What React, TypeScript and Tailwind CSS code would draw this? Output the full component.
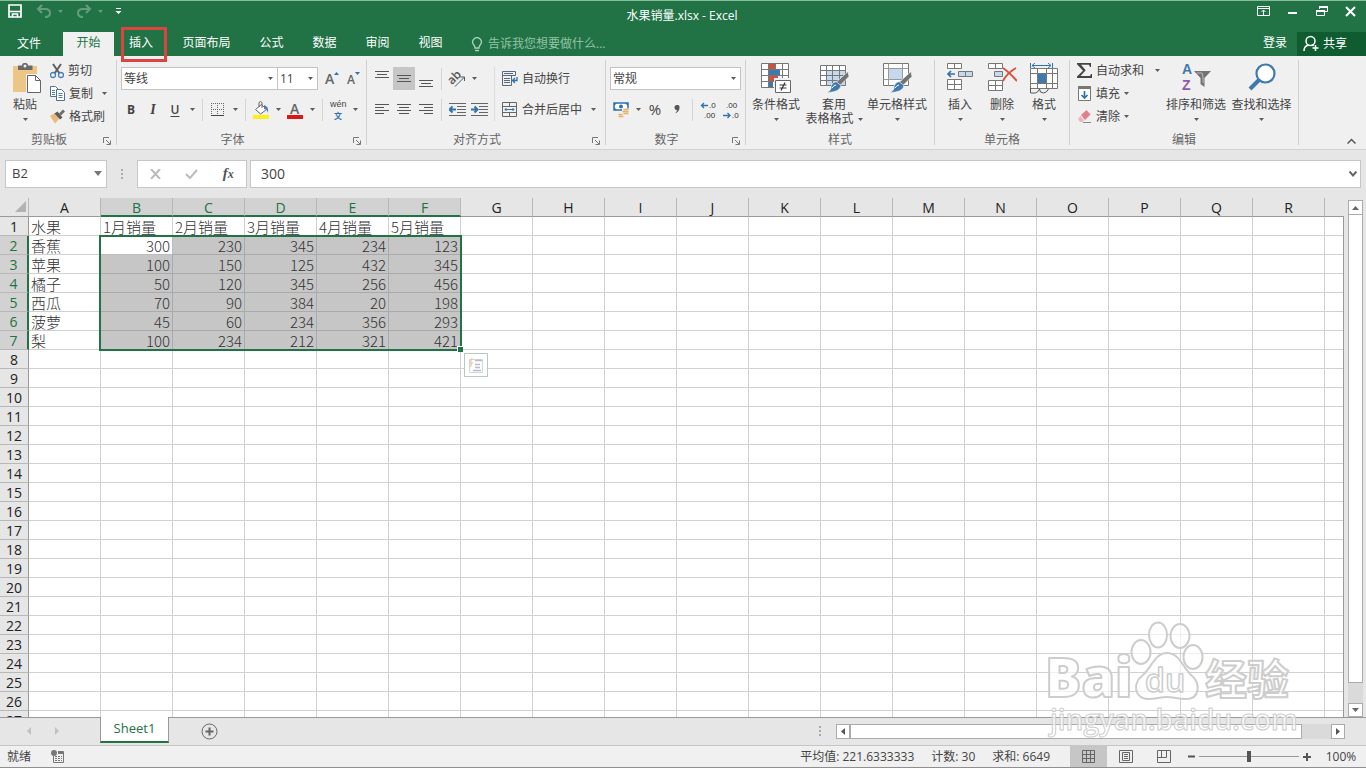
import type { ReactNode } from 'react';

const COLUMNS = 'ABCDEFGHIJKLMNOPQRS'.split('');
const ROW_COUNT = 27;

const SHEET: (string | number)[][] = [
  ['水果', '1月销量', '2月销量', '3月销量', '4月销量', '5月销量'],
  ['香蕉', 300, 230, 345, 234, 123],
  ['苹果', 100, 150, 125, 432, 345],
  ['橘子', 50, 120, 345, 256, 456],
  ['西瓜', 70, 90, 384, 20, 198],
  ['菠萝', 45, 60, 234, 356, 293],
  ['梨', 100, 234, 212, 321, 421],
];

const inSelectedRows = (row: number) => row >= 1 && row <= 6;
const inSelectedCols = (col: number) => col >= 1 && col <= 5;

/* ---------- small shared pieces ---------- */

function Caret({ className = '' }: { className?: string }) {
  return (
    <svg className={className} width="5" height="3" viewBox="0 0 5 3" aria-hidden="true">
      <path d="M0 0h5L2.500 3z" fill="#5c5c5c" />
    </svg>
  );
}

function CaretButton({ label }: { label: string }) {
  return (
    <button aria-label={label} className="flex h-[22px] w-3 items-center justify-center">
      <Caret />
    </button>
  );
}

function IconButton({ label, active = false, children }: { label: string; active?: boolean; children: ReactNode }) {
  return (
    <button
      aria-label={label}
      className={`flex h-[23px] w-[22px] shrink-0 items-center justify-center ${active ? 'bg-[#c6c6c6]' : ''}`}
    >
      {children}
    </button>
  );
}

function Rule() {
  return <span className="mx-1 h-[22px] w-px shrink-0 bg-[#d4d4d4]" />;
}

function RibbonGroup({
  title,
  launcher = false,
  className,
  children,
}: {
  title: string;
  launcher?: boolean;
  className: string;
  children: ReactNode;
}) {
  return (
    <section aria-label={title} className={`flex shrink-0 ${className}`}>
      <div className="flex min-w-0 flex-1 flex-col pt-[3px]">
        <div className="flex h-[70px]">{children}</div>
        <div className="flex h-5 items-center pt-[2px]">
          <span className="flex-1 text-center text-[#666]">{title}</span>
          {launcher && (
            <button aria-label={`${title}设置`} className="flex w-[18px] items-center justify-center pt-[2px]">
              <svg width="8" height="8" viewBox="0 0 8 8" fill="none" stroke="#777">
                <path d="M.5 6V.5H6M3 3l4 4M7.500 3.500v4h-4" />
              </svg>
            </button>
          )}
        </div>
      </div>
      <span className="my-1 w-px bg-[#d0d0d0]" />
    </section>
  );
}

function BigButton({
  label,
  secondLine,
  className,
  children,
}: {
  label: string;
  secondLine?: string;
  className: string;
  children: ReactNode;
}) {
  return (
    <button className={`flex shrink-0 flex-col items-center pt-1 leading-[14px] whitespace-nowrap ${className}`}>
      {children}
      <span className="mt-1">{label}</span>
      <span className="flex h-[14px] items-center gap-1">
        {secondLine}
        <Caret />
      </span>
    </button>
  );
}

function SmallButton({ label, children }: { label: string; children: ReactNode }) {
  return (
    <button className="flex h-[23px] items-center gap-1 whitespace-nowrap">
      {children}
      {label}
    </button>
  );
}

function Combo({ label, value, className }: { label: string; value: string; className: string }) {
  return (
    <div className={`relative h-[23px] ${className}`}>
      <select
        aria-label={label}
        className="h-full w-full appearance-none border border-[#c4c4c4] bg-white pl-[2px] text-[12px] text-[#444] outline-none"
      >
        <option>{value}</option>
      </select>
      <Caret className="pointer-events-none absolute top-[10px] right-[5px]" />
    </div>
  );
}

/* ---------- icons ---------- */

function Lines({ rows }: { rows: [number, number, number][] }) {
  return (
    <svg width="16" height="22" viewBox="0 0 16 22" stroke="#555" aria-hidden="true">
      {rows.map(([x1, x2, y]) => (
        <path key={y} d={`M${x1} ${y + 0.5}H${x2}`} />
      ))}
    </svg>
  );
}

function PasteIcon() {
  return (
    <svg className="ml-1" width="30" height="31" viewBox="0 0 30 31" aria-hidden="true">
      <path d="M1 3h24v26H1z" fill="#ecc684" />
      <path d="M6 7V2.500h4c0-3.500 6-3.500 6 0h4.500V7z" fill="#6a6a6a" />
      <circle cx="13" cy="3" r="1.500" fill="#f0f0f0" />
      <path d="M14 11h11v19H14z" fill="#f0f0f0" />
      <path d="M15.500 12.500h8l5 5v12h-13z" fill="#fff" stroke="#666" />
      <path d="M23.500 12.500v5h5" fill="none" stroke="#666" />
    </svg>
  );
}

function CutIcon() {
  return (
    <svg width="14" height="16" viewBox="0 0 14 16" fill="none" aria-hidden="true">
      <path d="M3 1l6.500 9.500M11 1L4.500 10.500" stroke="#5f5f5f" strokeWidth="2" />
      <circle cx="3" cy="12" r="2.500" stroke="#4a7fb5" strokeWidth="1.300" />
      <circle cx="11" cy="12" r="2.500" stroke="#4a7fb5" strokeWidth="1.300" />
    </svg>
  );
}

function CopyIcon() {
  return (
    <svg width="15" height="15" viewBox="0 0 15 15" fill="#fff" stroke="#56708c" aria-hidden="true">
      <path d="M.5.5h5l3 3v7h-8z" />
      <path d="M6.500 3.500h5l3 3v8h-8z" />
      <path d="M2 4.500h3M2 6.500h3M2 8.500h3M8.500 7.500h4M8.500 9.500h4M8.500 11.500h4" stroke="#4a7fb5" />
    </svg>
  );
}

function BrushIcon() {
  return (
    <svg width="15" height="15" viewBox="0 0 15 15" aria-hidden="true">
      <path d="M0 7l5-3 4 6-4 4.500z" fill="#ecb978" />
      <path d="M4.500 4.500l3-2 5 6-2.500 2z" fill="#5b5b5b" />
      <path d="M9 4.500l4-4 2 2-4 4z" fill="#6d6d6d" />
    </svg>
  );
}

function BorderIcon() {
  return (
    <svg width="14" height="14" viewBox="0 0 14 14" fill="none" stroke="#666" strokeDasharray="1 1" aria-hidden="true">
      <path d="M0 .5h13M0 6.500h13M.5 0v12M6.500 0v12M12.500 0v12" />
      <path d="M0 12.500h13" stroke="#444" strokeDasharray="none" />
    </svg>
  );
}

function FillIcon() {
  return (
    <svg width="18" height="18" viewBox="0 0 18 18" fill="none" aria-hidden="true">
      <path d="M3.500 8.500l6-5 5 5-6 4.500z" fill="#fff" stroke="#666" />
      <path d="M7 6V1.500q1.500-2 3 0V7" stroke="#666" />
      <path d="M12 4q5 1 4 8-1-4-4-4z" fill="#4a7fb5" />
      <path d="M1 14h16v4H1z" fill="#ffef14" />
    </svg>
  );
}

function OrientationIcon() {
  return (
    <svg className="overflow-visible" width="18" height="18" viewBox="0 0 18 18" fill="none" stroke="#555" aria-hidden="true">
      <text x="0" y="12" transform="rotate(-45 6 9)" fontSize="12" fontWeight="600" fill="#555" stroke="none">
        ab
      </text>
      <path d="M7 16.500l9-9M16.500 11V7h-4" />
    </svg>
  );
}

function IndentIcon({ increase = false }: { increase?: boolean }) {
  return (
    <svg width="17" height="14" viewBox="0 0 17 14" fill="none" aria-hidden="true">
      <path d="M0 .5h17M8 3.500h9M8 6.500h9M8 9.500h9M0 12.500h17" stroke="#666" />
      {increase ? (
        <path d="M0 6.500h6M3.500 3.500l3 3-3 3" stroke="#2f72b0" strokeWidth="2" />
      ) : (
        <path d="M1 6.500h6M3.500 3.500l-3 3 3 3" stroke="#2f72b0" strokeWidth="2" />
      )}
    </svg>
  );
}

function WrapIcon() {
  return (
    <svg width="16" height="16" viewBox="0 0 16 16" fill="none" stroke="#5a6a7a" aria-hidden="true">
      <path d="M.5 4.500h9v10h-9zM.5.500h13v4H.5z" />
      <path d="M2 2.500h9M2 7.500h6M2 9.500h6M2 11.500h6" />
      <path d="M15 6v3.500h-4M13 7l-2.500 2.500L13 12" stroke="#2f72b0" strokeWidth="1.300" />
    </svg>
  );
}

function MergeIcon() {
  return (
    <svg width="16" height="16" viewBox="0 0 16 16" fill="none" stroke="#666" aria-hidden="true">
      <path d="M.5.500h14v14H.5zM.5 4.500h14M.5 10.500h14M7.500.500v4M7.500 10.500v4" />
      <path d="M3 7.500h9M4.500 6L3 7.500 4.500 9M10.500 6L12 7.500 10.500 9" stroke="#2f72b0" />
    </svg>
  );
}

function CurrencyIcon() {
  return (
    <svg width="17" height="17" viewBox="0 0 17 17" fill="none" aria-hidden="true">
      <path d="M1 2h14v7H1z" fill="#fff" stroke="#2f72b0" strokeWidth="1.500" />
      <path d="M1 2h3L1 5zM15 2h-3l3 3zM1 9V6l3 3z" fill="#2f72b0" />
      <circle cx="8" cy="5.500" r="2" fill="#2f72b0" />
      <path d="M9 7.500h8v7h-4v2.500H5v-5h4z" fill="#f0f0f0" />
      <path d="M10.500 8.500h5M9.500 10.500h6M10.500 12.500h5M5.500 13.500h4M5.500 15.500h5" stroke="#e8b063" strokeWidth="1.500" />
    </svg>
  );
}

function DecimalIcon({ increase = false }: { increase?: boolean }) {
  return (
    <svg
      className="overflow-visible"
      width="17"
      height="16"
      viewBox="0 0 17 16"
      fontSize="8"
      fontFamily="Liberation Sans"
      fill="#333"
      aria-hidden="true"
    >
      <text x={increase ? 9 : 4} y="6">
        {increase ? '.0' : '.00'}
      </text>
      <text x={increase ? 4 : 10} y="16">
        {increase ? '.00' : '.0'}
      </text>
      {increase ? (
        <path d="M1.500 3.500H8M4 1L1.500 3.500 4 6" fill="none" stroke="#2f72b0" strokeWidth="1.300" />
      ) : (
        <path d="M1 13.500h7M5.500 11L8 13.500 5.500 16" fill="none" stroke="#2f72b0" strokeWidth="1.300" />
      )}
    </svg>
  );
}

function ConditionalIcon() {
  return (
    <svg width="30" height="31" viewBox="0 0 30 31" fill="none" aria-hidden="true">
      <path d="M.5.500h27v24H.5z" fill="#fff" />
      <path d="M8 1h6v6H8zM8 13h9v6H8z" fill="#c9553f" />
      <path d="M8 7h11v6H8zM8 19h4v6H8z" fill="#3f79ae" />
      <path d="M.5.500h27v24H.5zM.5 6.500h27M.5 12.500h27M.5 18.500h27M7.500.500v24M14.500.500v6M21.500.500v24" stroke="#777" />
      <path d="M13 15h17v16H13z" fill="#f0f0f0" />
      <path d="M14.500 17.500h15v12h-15z" fill="#fff" stroke="#666" />
      <path d="M18.500 22h7M18.500 25h7M24 19.500l-4 8" stroke="#333" strokeWidth="1.200" />
    </svg>
  );
}

function PaintBrush() {
  return (
    <>
      <path d="M29 8.500l1 5-9 9-4-3z" fill="#737373" stroke="#fff" strokeWidth=".6" />
      <path d="M17 18.500l5 4q-1 7-15 7 6-2 5-6 1-4 5-5z" fill="#3f79ae" stroke="#fff" strokeWidth=".6" />
      <path d="M13 25q2-3 4-3" stroke="#fff" />
    </>
  );
}

function TableStyleIcon() {
  return (
    <svg width="31" height="31" viewBox="0 0 31 31" fill="none" aria-hidden="true">
      <path d="M1.500 2.500h25v20h-25z" fill="#fff" />
      <path d="M8 7h18v15H8z" fill="#c4d8ee" />
      <path d="M1.500 2.500h25v20h-25zM1.500 7.500h25M1.500 12.500h25M1.500 17.500h25M7.500 2.500v20M13.500 2.500v20M20.500 2.500v20" stroke="#777" />
      <PaintBrush />
    </svg>
  );
}

function CellStyleIcon() {
  return (
    <svg width="31" height="31" viewBox="0 0 31 31" fill="none" aria-hidden="true">
      <path d="M1.500.500h25v22h-25z" fill="#fff" stroke="#777" />
      <path d="M1.500 5.500h25M1.500 16.500h25M6.500.500v22M20.500.500v22" stroke="#999" />
      <path d="M7 6h13v10H7z" fill="#c4d8ee" />
      <PaintBrush />
    </svg>
  );
}

function InsertCellsIcon() {
  return (
    <svg width="28" height="31" viewBox="0 0 28 31" fill="none" stroke="#777" aria-hidden="true">
      <path d="M1.500.500h14v5h-14zM8.500.500v5M1.500 16.500h14v10h-14zM1.500 21.500h14M8.500 16.500v10" fill="#fff" />
      <path d="M12.500 8.500h14v5h-14zM19.500 8.500v5" fill="#c4d8ee" />
      <path d="M2 11h7M5 8l-3 3 3 3" stroke="#2f72b0" strokeWidth="1.700" />
    </svg>
  );
}

function DeleteCellsIcon() {
  return (
    <svg width="30" height="31" viewBox="0 0 30 31" fill="none" stroke="#777" aria-hidden="true">
      <path d="M1.500.500h14v5h-14zM8.500.500v5M1.500 17.500h14v10h-14zM1.500 22.500h14M8.500 17.500v10" fill="#fff" />
      <path d="M7.500 8.500h8v5h-8z" fill="#c4d8ee" />
      <path d="M16 5q6 4 14 13M29 5q-9 5-13 13" stroke="#d6533c" strokeWidth="2" />
    </svg>
  );
}

function FormatCellsIcon() {
  return (
    <svg width="28" height="31" viewBox="0 0 28 31" fill="none" stroke="#777" aria-hidden="true">
      <path d="M.5 5.500h27v20H.5z" fill="#fff" />
      <path d="M.5 10.500h27M.5 20.500h27M7.500 5.500v20M16.500 5.500v20M22.500 5.500v20" />
      <path d="M8 11h8v9H8z" fill="#3f79ae" stroke="none" />
      <path d="M.5 25v5h5q3-1 4-4 0 4 4 4 3 0 5-4" stroke="#555" />
      <path d="M.5 0v5M22.500 0v5M2 2.500h19M5 0L2 2.500 5 5M18 0l3 2.500L18 5" stroke="#2f72b0" />
    </svg>
  );
}

function SigmaIcon() {
  return (
    <svg width="15" height="15" viewBox="0 0 15 15" aria-hidden="true">
      <path d="M0 0h14v4h-1l-1-2.300H4l4.700 5.600L3.500 13H13l1-2h1v4H0v-1.500L6 7.700 0 1.300z" fill="#444" />
    </svg>
  );
}

function FillDownIcon() {
  return (
    <svg width="15" height="15" viewBox="0 0 15 15" fill="none" aria-hidden="true">
      <path d="M1.500.5h12v14h-12z" fill="#fff" stroke="#777" />
      <path d="M1 0h13v3H1z" fill="#777" />
      <path d="M7.500 5v7M4.500 9l3 3 3-3" stroke="#2f72b0" strokeWidth="1.700" />
    </svg>
  );
}

function EraserIcon() {
  return (
    <svg width="15" height="15" viewBox="0 0 15 15" aria-hidden="true">
      <path d="M4 6l5.500-5 4 4.500L8 11z" fill="#e0808c" />
      <path d="M3.300 6.700L7 11.500l-1.500 1.500H3L1 10z" fill="#f0b6bd" />
      <path d="M6 13.500h8" stroke="#888" />
    </svg>
  );
}

function SortFilterIcon() {
  return (
    <svg
      className="overflow-visible"
      width="30"
      height="31"
      viewBox="0 0 30 31"
      fontSize="14"
      fontWeight="700"
      fontFamily="Liberation Sans"
      aria-hidden="true"
    >
      <text x="1" y="11" fill="#3f79ae">
        A
      </text>
      <text x="1" y="27" fill="#8c5aa8">
        Z
      </text>
      <path d="M13 8h17l-6.500 7v9l-4-3v-6z" fill="#737373" />
      <path d="M16 10h5l1 4v6" fill="none" stroke="#bbb" />
    </svg>
  );
}

function FindIcon() {
  return (
    <svg width="30" height="31" viewBox="0 0 30 31" fill="none" aria-hidden="true">
      <path d="M12 17L3 26" stroke="#3f79ae" strokeWidth="4" />
      <circle cx="18.500" cy="10.500" r="9" fill="#fff" stroke="#3f79ae" strokeWidth="2.200" />
    </svg>
  );
}

/* ---------- window header ---------- */

function TitleBar() {
  return (
    <header className="relative flex h-[31px] shrink-0 items-start border-t border-[#86bd9c] bg-[#217346] text-white">
      <div className="flex items-center pt-[3px]">
        <button aria-label="保存" className="ml-2">
          <svg width="14" height="14" viewBox="0 0 14 14" fill="none" stroke="#fff" strokeWidth="1.700">
            <path d="M1 1h12v12H1zM1.500 7.500h11M4.500 13v-3h5v3" />
          </svg>
        </button>
        <button aria-label="撤消" className="ml-[14px] flex items-center gap-[6px] opacity-30">
          <svg width="16" height="14" viewBox="0 0 16 14" fill="none" stroke="#fff" strokeWidth="2">
            <path d="M6 1L2 5l4 4M2 5h7q5 0 5 4t-5 4" />
          </svg>
          <svg width="5" height="3"><path d="M0 0h5L2.500 3z" fill="#fff" /></svg>
        </button>
        <button aria-label="恢复" className="ml-[13px] flex items-center gap-[6px] opacity-30">
          <svg width="16" height="14" viewBox="0 0 16 14" fill="none" stroke="#fff" strokeWidth="2">
            <path d="M10 1l4 4-4 4M14 5H7q-5 0-5 4t5 4" />
          </svg>
          <svg width="5" height="3"><path d="M0 0h5L2.500 3z" fill="#fff" /></svg>
        </button>
        <button aria-label="自定义快速访问工具栏" className="ml-3">
          <svg width="7" height="7" viewBox="0 0 7 7" fill="#fff">
            <path d="M1 0h5v1H1zM.5 3h6l-3 3z" />
          </svg>
        </button>
      </div>
      <h1 className="absolute inset-x-0 top-[6px] pr-[2px] text-center text-[12px] leading-[18px]">水果销量.xlsx - Excel</h1>
      <div className="relative ml-auto flex items-center gap-[14px] pt-[3px] pr-2">
        <button aria-label="功能区显示选项">
          <svg width="15" height="15" viewBox="0 0 15 15" fill="none" stroke="#fff">
            <path d="M1.500 2.500h12v9h-12zM1.500 4.500h12M7.500 11V6M5.500 8l2-2 2 2" />
          </svg>
        </button>
        <button aria-label="最小化">
          <svg width="15" height="15" viewBox="0 0 15 15"><path d="M3 8h9v2H3z" fill="#fff" /></svg>
        </button>
        <button aria-label="还原">
          <svg width="15" height="15" viewBox="0 0 15 15" fill="none" stroke="#fff">
            <path d="M5.500 5V2.500h8v5H11M2.500 6.500h8v5h-8z" />
            <path d="M5 3h9M2 7h9" strokeWidth="2" />
          </svg>
        </button>
        <button aria-label="关闭">
          <svg width="15" height="15" viewBox="0 0 15 15" stroke="#fff" strokeWidth="2">
            <path d="M3 3l9 9M12 3l-9 9" />
          </svg>
        </button>
      </div>
    </header>
  );
}

const TABS = ['页面布局', '公式', '数据', '审阅', '视图'];

function TabRow() {
  return (
    <nav className="flex h-[25px] shrink-0 items-stretch bg-[#217346] pt-px text-[12px] leading-[20px] text-white">
      <button className="w-[63px] pr-[5px]">文件</button>
      <button className="w-[51px] bg-[#f0f0f0] pb-[2px] text-[#217346]">开始</button>
      <button className="relative w-[54px] pb-[2px]">
        插入
        <span className="absolute -top-[5px] left-[7px] z-10 h-[35px] w-[46px] border-3 border-[#dd4440]" />
      </button>
      {TABS.map((tab) => (
        <button key={tab} className={tab.length > 2 ? 'w-[77px] pb-[2px]' : 'w-[53px] pb-[2px]'}>
          {tab}
        </button>
      ))}
      <button className="ml-[14px] flex items-center gap-[5px] text-[#93c3a6]">
        <svg width="12" height="15" viewBox="0 0 12 15" fill="none" stroke="#a9d3ba" strokeWidth="1.300">
          <path d="M4 11q0-2-1.500-3.500a4.300 4.300 0 1 1 7 0Q8 9 8 11zM4 13.500h4" />
        </svg>
        告诉我您想要做什么...
      </button>
      <button className="mr-[10px] ml-auto pb-[2px]">登录</button>
      <button className="flex w-[69px] items-center gap-1 bg-[#0e5c2f] pb-px pl-[6px]">
        <svg width="16" height="17" viewBox="0 0 16 17" fill="none" stroke="#fff" strokeWidth="1.500">
          <circle cx="7.500" cy="6" r="4.500" />
          <path d="M1 16q0-5 4.500-6M9 9.500l1.500 1.500M12.500 10v6M9.500 13h6" />
        </svg>
        共享
      </button>
    </nav>
  );
}

/* ---------- ribbon ---------- */

function Ribbon() {
  return (
    <div className="flex shrink-0 overflow-hidden border-b border-[#d2d2d2] bg-[#f0f0f0] text-[12px] text-[#444]">
      <RibbonGroup title="剪贴板" launcher className="w-[117px]">
        <BigButton label="粘贴" className="w-[50px]">
          <PasteIcon />
        </BigButton>
        <div className="flex flex-col">
          <SmallButton label="剪切"><CutIcon /></SmallButton>
          <div className="flex items-center">
            <SmallButton label="复制"><CopyIcon /></SmallButton>
            <span className="ml-[5px]"><CaretButton label="复制选项" /></span>
          </div>
          <SmallButton label="格式刷"><BrushIcon /></SmallButton>
        </div>
      </RibbonGroup>

      <RibbonGroup title="字体" launcher className="w-[250px]">
        <div className="flex flex-col gap-2 pt-2">
          <div className="flex pl-1">
            <Combo label="字体" value="等线" className="w-[157px]" />
            <Combo label="字号" value="11" className="-ml-px w-[41px]" />
            <span className="w-[3px]" />
            <IconButton label="增大字号">
              <svg className="overflow-visible" width="14" height="15" viewBox="0 0 14 15" fontSize="14" fontWeight="600" fill="#666">
                <text x="0" y="13">A</text>
                <path d="M9 4h5l-2.500-3z" fill="#2f72b0" />
              </svg>
            </IconButton>
            <IconButton label="减小字号">
              <svg className="overflow-visible" width="14" height="15" viewBox="0 0 14 15" fontSize="12" fontWeight="600" fill="#666">
                <text x="0" y="13">A</text>
                <path d="M8 1h5l-2.500 3z" fill="#2f72b0" />
              </svg>
            </IconButton>
          </div>
          <div className="flex items-center pl-[3px]">
            <IconButton label="加粗"><b>B</b></IconButton>
            <IconButton label="倾斜"><i className="font-['Liberation_Serif',serif] text-[14px] font-bold">I</i></IconButton>
            <IconButton label="下划线"><span className="font-semibold underline underline-offset-2">U</span></IconButton>
            <CaretButton label="下划线选项" />
            <Rule />
            <IconButton label="边框"><BorderIcon /></IconButton>
            <CaretButton label="边框选项" />
            <Rule />
            <IconButton label="填充颜色"><FillIcon /></IconButton>
            <CaretButton label="填充颜色选项" />
            <IconButton label="字体颜色">
              <svg className="overflow-visible" width="16" height="18" viewBox="0 0 16 18" fontSize="14" fontWeight="600" fill="#666">
                <text x="3" y="13">A</text>
                <path d="M0 14h16v4H0z" fill="#d81a12" />
              </svg>
            </IconButton>
            <CaretButton label="字体颜色选项" />
            <Rule />
            <IconButton label="拼音指南">
              <svg className="overflow-visible" width="18" height="18" viewBox="0 0 18 18" fontFamily="Liberation Sans, Noto Sans CJK SC">
                <text x="1" y="6" fontSize="9" fill="#444">wén</text>
                <text x="5" y="18" fontSize="8" fontWeight="700" fill="#2f72b0">文</text>
              </svg>
            </IconButton>
            <CaretButton label="拼音选项" />
          </div>
        </div>
      </RibbonGroup>

      <RibbonGroup title="对齐方式" launcher className="w-[239px]">
        <div className="flex flex-col gap-2 pt-2 pl-1">
          <div className="flex items-center">
            <IconButton label="顶端对齐"><Lines rows={[[1, 15, 3], [3, 13, 6], [1, 15, 9]]} /></IconButton>
            <IconButton label="垂直居中" active><Lines rows={[[1, 15, 7], [3, 13, 10], [1, 15, 13]]} /></IconButton>
            <IconButton label="底端对齐"><Lines rows={[[1, 15, 12], [3, 13, 15], [1, 15, 18]]} /></IconButton>
            <Rule />
            <IconButton label="方向"><OrientationIcon /></IconButton>
            <CaretButton label="方向选项" />
          </div>
          <div className="flex items-center">
            <IconButton label="左对齐"><Lines rows={[[1, 15, 5], [1, 10, 8], [1, 15, 11], [1, 10, 14]]} /></IconButton>
            <IconButton label="居中"><Lines rows={[[1, 15, 5], [3, 13, 8], [1, 15, 11], [3, 13, 14]]} /></IconButton>
            <IconButton label="右对齐"><Lines rows={[[1, 15, 5], [6, 15, 8], [1, 15, 11], [6, 15, 14]]} /></IconButton>
            <Rule />
            <IconButton label="减少缩进量"><IndentIcon /></IconButton>
            <IconButton label="增加缩进量"><IndentIcon increase /></IconButton>
          </div>
        </div>
        <span className="mt-2 ml-1 h-[54px] w-px bg-[#dcdcdc]" />
        <div className="flex flex-1 flex-col gap-2 pt-2 pl-[7px]">
          <SmallButton label="自动换行"><WrapIcon /></SmallButton>
          <div className="flex items-center">
            <SmallButton label="合并后居中"><MergeIcon /></SmallButton>
            <span className="ml-[5px]"><CaretButton label="合并选项" /></span>
          </div>
        </div>
      </RibbonGroup>

      <RibbonGroup title="数字" launcher className="w-[140px]">
        <div className="flex flex-col gap-2 pt-2 pl-1">
          <Combo label="数字格式" value="常规" className="w-[131px]" />
          <div className="flex items-center">
            <IconButton label="会计数字格式"><CurrencyIcon /></IconButton>
            <CaretButton label="会计数字格式选项" />
            <IconButton label="百分比样式"><span className="text-[15px]">%</span></IconButton>
            <IconButton label="千位分隔样式">
              <svg width="6" height="9" viewBox="0 0 6 9">
                <path d="M3 0a2.300 2.300 0 0 1 2.500 2.500Q5.500 6.500 1 8.500q2-2 2-3.500A2.500 2.500 0 0 1 3 0z" fill="#555" />
              </svg>
            </IconButton>
            <Rule />
            <IconButton label="增加小数位数"><DecimalIcon increase /></IconButton>
            <IconButton label="减少小数位数"><DecimalIcon /></IconButton>
          </div>
        </div>
      </RibbonGroup>

      <RibbonGroup title="样式" className="w-[189px]">
        <BigButton label="条件格式" className="w-[60px]"><ConditionalIcon /></BigButton>
        <BigButton label="套用" secondLine="表格格式" className="w-[56px]"><TableStyleIcon /></BigButton>
        <BigButton label="单元格样式" className="w-[70px]"><CellStyleIcon /></BigButton>
      </RibbonGroup>

      <RibbonGroup title="单元格" className="w-[135px]">
        <span className="w-1" />
        <BigButton label="插入" className="w-[42px]"><InsertCellsIcon /></BigButton>
        <BigButton label="删除" className="w-[42px]"><DeleteCellsIcon /></BigButton>
        <BigButton label="格式" className="w-[42px]"><FormatCellsIcon /></BigButton>
      </RibbonGroup>

      <RibbonGroup title="编辑" className="w-[229px]">
        <div className="flex w-[93px] flex-col pl-[7px]">
          <div className="flex items-center justify-between">
            <SmallButton label="自动求和"><SigmaIcon /></SmallButton>
            <CaretButton label="求和选项" />
          </div>
          <div className="flex items-center">
            <SmallButton label="填充"><FillDownIcon /></SmallButton>
            <CaretButton label="填充选项" />
          </div>
          <div className="flex items-center">
            <SmallButton label="清除"><EraserIcon /></SmallButton>
            <CaretButton label="清除选项" />
          </div>
        </div>
        <BigButton label="排序和筛选" className="w-[66px]"><SortFilterIcon /></BigButton>
        <BigButton label="查找和选择" className="w-[65px]"><FindIcon /></BigButton>
      </RibbonGroup>

      <button aria-label="折叠功能区" className="mr-[10px] mb-[5px] ml-auto self-end">
        <svg width="9" height="6" viewBox="0 0 9 6" fill="none" stroke="#555" strokeWidth="1.500">
          <path d="M.5 5.500l4-4 4 4" />
        </svg>
      </button>
    </div>
  );
}

/* ---------- formula bar ---------- */

function FormulaBar() {
  return (
    <div className="flex h-12 shrink-0 items-start pt-[10px] pr-[5px] pl-[5px] text-[14px] text-[#444]">
      <div className="relative h-7 w-[102px] shrink-0">
        <input
          aria-label="名称框"
          defaultValue="B2"
          className="h-full w-full border border-[#c6c6c6] bg-white pb-[2px] pl-[6px] text-[13px] outline-none"
        />
        <svg className="absolute top-[11px] right-[5px]" width="8" height="5" viewBox="0 0 8 5" aria-hidden="true">
          <path d="M0 0h8L4 5z" fill="#777" />
        </svg>
      </div>
      <svg className="mx-[14px] h-7 w-[2px] shrink-0" viewBox="0 0 2 28" fill="#aaa" aria-hidden="true">
        <path d="M0 9h2v2H0zM0 13h2v2H0zM0 17h2v2H0z" />
      </svg>
      <div className="flex h-7 w-[110px] shrink-0 items-center justify-around border border-[#c6c6c6] bg-white">
        <button aria-label="取消">
          <svg width="11" height="10" viewBox="0 0 11 10" stroke="#bbb" strokeWidth="2"><path d="M1 0l9 10M10 0L1 10" /></svg>
        </button>
        <button aria-label="输入">
          <svg width="13" height="10" viewBox="0 0 13 10" fill="none" stroke="#bbb" strokeWidth="2"><path d="M1 5l4 4 7-8" /></svg>
        </button>
        <button aria-label="插入函数" className="pb-px font-['Liberation_Serif',serif] text-[15px] font-bold text-[#555] italic">
          f<span className="text-[12px]">x</span>
        </button>
      </div>
      <div className="relative ml-[3px] h-7 flex-1">
        <input
          aria-label="编辑栏"
          defaultValue="300"
          className="h-full w-full border border-[#c6c6c6] bg-white pb-[2px] pl-[10px] outline-none"
        />
        <svg className="absolute top-[11px] right-[4px]" width="8" height="6" viewBox="0 0 8 6" fill="none" stroke="#666" strokeWidth="2" aria-hidden="true">
          <path d="M.5.500L4 4.500 7.500.500" />
        </svg>
      </div>
    </div>
  );
}

/* ---------- worksheet ---------- */

function columnHeaderClass(col: number) {
  return inSelectedCols(col)
    ? 'border-b-2 border-b-[#217346] border-r-[#b8b8b8] bg-[#d2d2d2] text-[#217346]'
    : 'border-b border-b-[#999] border-r-[#b8b8b8] bg-[#e6e6e6] text-[#222]';
}

function rowHeaderClass(row: number) {
  return inSelectedRows(row)
    ? 'border-r-2 border-r-[#217346] border-b-[#b8b8b8] bg-[#d2d2d2] text-[#217346]'
    : 'border-r border-r-[#999] border-b-[#b8b8b8] bg-[#e6e6e6] text-[#222]';
}

function cellClass(row: number, col: number) {
  if (row === 1 && col === 1) return 'border-[#bdbdbd] bg-white';
  if (inSelectedRows(row) && inSelectedCols(col)) return 'border-[#aaa] bg-[#c6c6c6]';
  return 'border-[#d0d0d0] bg-white';
}

function Worksheet() {
  return (
    <main className="relative min-w-0 flex-1 overflow-hidden">
      <table className="w-px table-fixed border-separate border-spacing-0 whitespace-nowrap">
        <colgroup>
          <col className="w-[29px]" />
          {COLUMNS.map((name) => (
            <col key={name} className="w-[72px]" />
          ))}
        </colgroup>
        <thead>
          <tr className="h-[19px] text-[14px] leading-[15px]">
            <th aria-label="全选" className="border-r border-b border-[#999] border-r-[#b8b8b8] p-0">
              <svg className="ml-auto" width="14" height="14" viewBox="0 0 14 14"><path d="M12 1v11H1z" fill="#b2b2b2" /></svg>
            </th>
            {COLUMNS.map((name, col) => (
              <th
                key={name}
                scope="col"
                className={`h-[19px] border-r px-0 pt-[2px] pb-0 align-top font-normal ${columnHeaderClass(col)}`}
              >
                {name}
              </th>
            ))}
          </tr>
        </thead>
        <tbody>
          {Array.from({ length: ROW_COUNT }, (_, row) => (
            <tr key={row} className="h-[19px]">
              <th
                scope="row"
                className={`h-[19px] border-b px-0 pt-[2px] pb-0 text-center text-[14px] leading-[16px] font-normal ${rowHeaderClass(row)}`}
              >
                {row + 1}
              </th>
              {COLUMNS.map((name, col) => {
                const value = SHEET[row]?.[col];
                return (
                  <td
                    key={name}
                    className={`h-[19px] border-r border-b px-[2px] pt-[2px] pb-0 font-['Noto_Sans_CJK_SC',sans-serif] text-[15px] leading-[16px] font-light text-[#333] ${cellClass(row, col)} ${typeof value === 'number' ? 'text-right' : 'text-left'}`}
                  >
                    {value}
                  </td>
                );
              })}
            </tr>
          ))}
        </tbody>
      </table>

      {/* selection frame, fill handle and quick analysis button over B2:F7 */}
      <div className="pointer-events-none absolute top-[37px] left-[99px] h-[116px] w-[363px] border-2 border-[#217346]">
        <span className="absolute -right-[3px] -bottom-[3px] h-[6px] w-[6px] border-t border-l border-white bg-[#217346]" />
      </div>
      <button aria-label="快速分析" className="absolute top-[155px] left-[464px] flex h-6 w-6 items-center justify-center border border-[#b9c9c0] bg-white">
        <svg width="14" height="15" viewBox="0 0 14 15" fill="none">
          <path d="M.5 1.500h13v13H.5z" stroke="#cfd6e2" />
          <path d="M6 2.500h7M6 6.500h5M6 9.500h5M4 12.500h8" stroke="#b9bcd0" strokeWidth="1.500" />
          <path d="M3 0L1 5h2L1 9" stroke="#f0c9a8" strokeWidth="1.500" />
        </svg>
      </button>
      <span className="pointer-events-none absolute top-[18px] right-0 bottom-0 w-px bg-[#999]" />
    </main>
  );
}

function VerticalScrollbar() {
  return (
    <div className="flex w-[22px] shrink-0 flex-col pt-[2px] pr-[3px] pl-1">
      <button aria-label="向上滚动" className="flex h-[15px] items-center justify-center border border-[#ababab] bg-white">
        <svg width="7" height="4"><path d="M0 4h7L3.500 0z" fill="#666" /></svg>
      </button>
      <div className="flex flex-1 flex-col bg-[#dadada]">
        <div className="h-[96%] border border-t-0 border-[#ababab] bg-white" />
      </div>
      <button aria-label="向下滚动" className="flex h-[14px] items-center justify-center border border-[#ababab] bg-white">
        <svg width="7" height="4"><path d="M0 0h7L3.500 4z" fill="#666" /></svg>
      </button>
    </div>
  );
}

function Watermark() {
  return (
    <svg
      className="pointer-events-none absolute right-[68px] bottom-[22px] overflow-visible"
      width="254"
      height="130"
      viewBox="0 0 254 130"
      aria-hidden="true"
    >
      <g fill="#fff" fillOpacity=".65" stroke="#cdcdcd" strokeWidth="2" strokeLinejoin="round">
        <text x="1" y="81" fontSize="54" fontWeight="800">Bai</text>
        <ellipse cx="97" cy="36" rx="9.500" ry="12" />
        <ellipse cx="114" cy="19" rx="9" ry="12.500" />
        <ellipse cx="136" cy="20" rx="9.500" ry="12" />
        <ellipse cx="149" cy="41" rx="9.500" ry="12" />
        <path d="M123 37c12 0 15 13 24 22 10 8 9 24-5 24-8 0-12-2-19-2s-11 2-18 2c-15 0-17-16-6-24 9-8 12-22 24-22z" />
        <text x="101" y="76" fontSize="32" fontWeight="600" strokeWidth="1.500">du</text>
        <text x="161" y="79" fontSize="42" fontWeight="700" fontFamily="Noto Sans CJK SC">经验</text>
        <text x="6" y="114" fontSize="28" fontWeight="600" strokeWidth="1">jingyan.baidu.com</text>
      </g>
    </svg>
  );
}

/* ---------- bottom bars ---------- */

function SheetTabs() {
  return (
    <div className="flex h-7 shrink-0 items-start border-t border-[#999]">
      <button aria-label="上一个工作表" className="mt-[9px] ml-[27px]">
        <svg width="4" height="8"><path d="M4 0v8L0 4z" fill="#c0c0c0" /></svg>
      </button>
      <button aria-label="下一个工作表" className="mt-[9px] ml-6">
        <svg width="4" height="8"><path d="M0 0v8l4-4z" fill="#c0c0c0" /></svg>
      </button>
      <button className="-mt-px ml-[41px] h-[26px] w-[69px] border-x border-b-2 border-x-[#999] border-b-[#217346] bg-white text-[13px] text-[#217346]">
        Sheet1
      </button>
      <button aria-label="新工作表" className="mt-[5px] ml-[32px]">
        <svg width="17" height="17" viewBox="0 0 17 17" fill="none" stroke="#666">
          <circle cx="8.500" cy="8.500" r="7.500" />
          <path d="M4.500 8.500h8M8.500 4.500v8" strokeWidth="2" />
        </svg>
      </button>
      <svg className="mt-2 ml-auto" width="2" height="11" fill="#aaa" aria-hidden="true">
        <path d="M0 0h2v2H0zM0 4h2v2H0zM0 8h2v2H0z" />
      </svg>
      <div className="mt-[6px] mr-[21px] ml-[15px] flex h-[15px] w-[38%] max-w-[509px] bg-[#dadada]">
        <button aria-label="向左滚动" className="flex w-[14px] items-center justify-center border border-[#ababab] bg-white">
          <svg width="4" height="7"><path d="M4 0v7L0 3.500z" fill="#555" /></svg>
        </button>
        <div className="w-[452px] border border-[#ababab] bg-white" />
        <button aria-label="向右滚动" className="ml-auto flex w-[14px] items-center justify-center border border-[#ababab] bg-white">
          <svg width="4" height="7"><path d="M0 0v7l4-3.500z" fill="#555" /></svg>
        </button>
      </div>
    </div>
  );
}

function StatusBar() {
  return (
    <footer className="flex h-[23px] shrink-0 items-center border-t border-b border-t-[#c6c6c6] border-b-[#8f8f8f] bg-[#f0f0f0] text-[12px] whitespace-nowrap text-[#444]">
      <span className="ml-[7px]">就绪</span>
      <button aria-label="录制宏" className="ml-5">
        <svg width="13" height="13" viewBox="0 0 13 13" fill="none" stroke="#777">
          <path d="M2.500 6v6.500h10v-11H7" />
          <path d="M7 2h6v2H7z" fill="#777" stroke="none" />
          <path d="M4 6.500h7M4 8.500h7M4 10.500h7" strokeDasharray="2 1" />
          <circle cx="3" cy="3" r="3" fill="#777" stroke="none" />
        </svg>
      </button>
      <div className="ml-auto flex gap-[17px]">
        <span>平均值: 221.6333333</span>
        <span>计数: 30</span>
        <span>求和: 6649</span>
      </div>
      <div className="ml-5 flex h-full">
        <button aria-label="普通视图" className="flex w-[37px] items-center justify-center bg-[#c6c6c6]">
          <svg width="13" height="13" viewBox="0 0 13 13" fill="none" stroke="#666">
            <path d="M.5.500h12v12H.5zM.5 4.500h12M.5 8.500h12M4.500.500v12M8.500.500v12" />
          </svg>
        </button>
        <button aria-label="页面布局视图" className="flex w-[38px] items-center justify-center">
          <svg width="14" height="13" viewBox="0 0 14 13" fill="none" stroke="#666">
            <path d="M.5.500h13v12H.5zM3.500 2.500h7v8h-7zM5 4.500h4M5 6.500h4M5 8.500h4" />
          </svg>
        </button>
        <button aria-label="分页预览" className="flex w-[38px] items-center justify-center">
          <svg width="14" height="13" viewBox="0 0 14 13" fill="none" stroke="#666">
            <path d="M.5.500h13v12H.5zM4.500.500v7M9.500.500v7M.5 7.500h9" />
          </svg>
        </button>
      </div>
      <button aria-label="缩小" className="ml-[5px]">
        <svg width="7" height="7"><path d="M0 2.500h7v2H0z" fill="#555" /></svg>
      </button>
      <input
        type="range"
        aria-label="缩放"
        min={0}
        max={100}
        defaultValue={50}
        className="mx-1 h-3 w-[100px] appearance-none bg-transparent [&::-webkit-slider-runnable-track]:h-px [&::-webkit-slider-runnable-track]:bg-[#999] [&::-webkit-slider-thumb]:-mt-[5px] [&::-webkit-slider-thumb]:h-[11px] [&::-webkit-slider-thumb]:w-1 [&::-webkit-slider-thumb]:appearance-none [&::-webkit-slider-thumb]:bg-[#555]"
      />
      <button aria-label="放大">
        <svg width="8" height="8"><path d="M0 3h3V0h2v3h3v2H5v3H3V5H0z" fill="#555" /></svg>
      </button>
      <span className="mr-[9px] ml-[14px] w-8 text-center">100%</span>
    </footer>
  );
}

export default function App() {
  return (
    <div className="relative flex h-screen min-h-[400px] flex-col overflow-hidden bg-[#e6e6e6] font-['Open_Sans','Noto_Sans_CJK_SC',sans-serif]">
      <TitleBar />
      <TabRow />
      <Ribbon />
      <FormulaBar />
      <div className="flex min-h-0 flex-1">
        <Worksheet />
        <VerticalScrollbar />
      </div>
      <SheetTabs />
      <StatusBar />
      <Watermark />
    </div>
  );
}
